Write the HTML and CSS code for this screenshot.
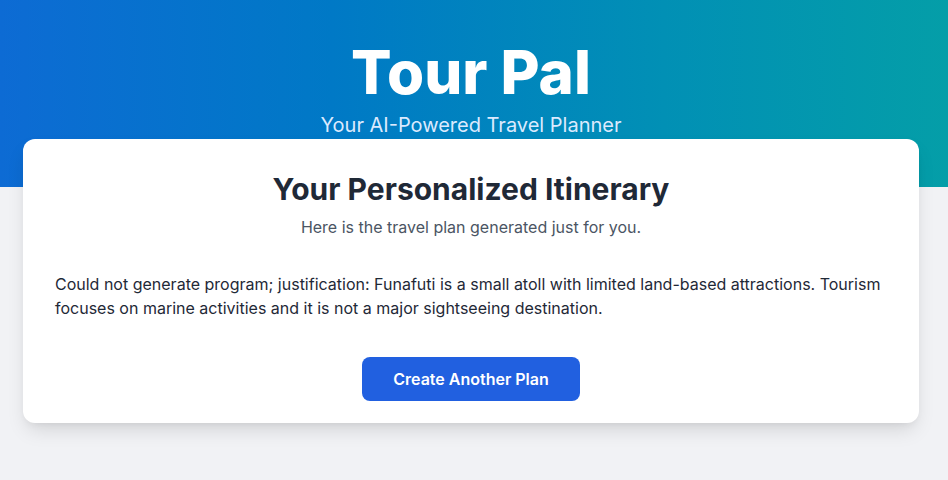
FILE: index.html
```html
<!DOCTYPE html>
<html lang="en">
<head>
<meta charset="utf-8">
<title>Tour Pal</title>
<link rel="stylesheet" href="styles.css">
</head>
<body>
<header class="hero">
  <h1 class="hero-title">Tour Pal</h1>
  <p class="hero-sub">Your AI-Powered Travel Planner</p>
</header>
<main class="main">
  <section class="card">
    <h2 class="card-title">Your Personalized Itinerary</h2>
    <p class="card-sub">Here is the travel plan generated just for you.</p>
    <p class="card-text">Could not generate program; justification: Funafuti is a small atoll with limited land-based attractions. Tourism focuses on marine activities and it is not a major sightseeing destination.</p>
    <div class="actions">
      <button class="btn" type="button">Create Another Plan</button>
    </div>
  </section>
</main>
</body>
</html>
```
FILE: styles.css
```css
* { box-sizing: border-box; }
html, body { margin: 0; padding: 0; }
body {
  background: #f1f2f5;
  font-family: Inter, "Noto Sans", sans-serif;
  color: #1f2937;
  min-height: 480px;
}
.hero {
  background: linear-gradient(90deg, #0d6bd4 0%, #0079c6 35%, #0190b5 70%, #049ea8 100%);
  padding: 42px 29px 48px 23px;
  text-align: center;
  color: #fff;
}
.hero-title {
  margin: 0;
  font-size: 60px;
  line-height: 60px;
  font-weight: 800;
}
.hero-sub {
  margin: 9px 0 0;
  font-size: 20px;
  line-height: 28px;
  color: #dbeafe;
}
.main {
  padding: 0 29px 0 23px;
  margin-top: -48px;
}
.card {
  background: #fff;
  border-radius: 12px;
  box-shadow: 0 10px 20px -4px rgba(0,0,0,0.13), 0 4px 8px -4px rgba(0,0,0,0.08);
  padding: 32px 32px 22px;
  text-align: center;
}
.card-title {
  margin: 0;
  font-size: 30px;
  line-height: 36px;
  font-weight: 700;
  color: #1f2937;
}
.card-sub {
  margin: 8px 0 0;
  font-size: 16px;
  line-height: 24px;
  color: #4b5563;
}
.card-text {
  margin: 33px 0 0;
  text-align: left;
  font-size: 16px;
  line-height: 24px;
  color: #1f2937;
}
.actions {
  margin-top: 37px;
  display: flex;
  justify-content: center;
}
.btn {
  font-family: inherit;
  background: #2160e0;
  color: #fff;
  border: 0;
  border-radius: 8px;
  height: 44px;
  padding: 0 31px;
  font-size: 16px;
  font-weight: 600;
  cursor: pointer;
}
```
